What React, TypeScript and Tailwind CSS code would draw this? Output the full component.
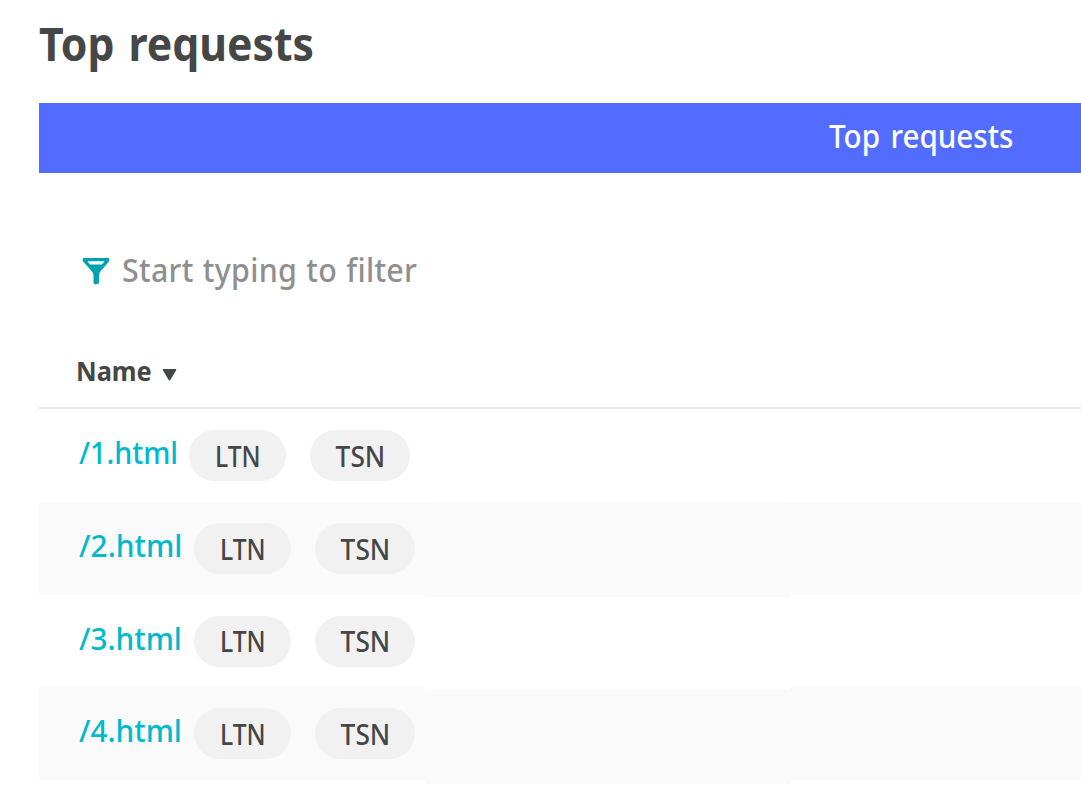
type Row = { name: string; linkWidth: string; textScale: string; tags: string[] };

const rows: Row[] = [
  { name: "/1.html", linkWidth: "w-[110px]", textScale: "scale-x-[0.925]", tags: ["LTN", "TSN"] },
  { name: "/2.html", linkWidth: "w-[115px]", textScale: "scale-x-[0.965]", tags: ["LTN", "TSN"] },
  { name: "/3.html", linkWidth: "w-[115px]", textScale: "scale-x-[0.96]", tags: ["LTN", "TSN"] },
  { name: "/4.html", linkWidth: "w-[115px]", textScale: "scale-x-[0.96]", tags: ["LTN", "TSN"] },
];

function FunnelIcon() {
  return (
    <svg width="28" height="28" viewBox="0 0 28 28" fill="#00a1b2" fillRule="evenodd">
      <path d="M1.500 1h25Q27.500 1 27.300 2.500V4L18.200 14.800Q17 16.300 17 18.500V25.500Q17 27.300 14.200 27.300T11.500 25.500V18.500Q11.500 16.300 10.200 14.800L.7 4V2.500Q.5 1 1.500 1ZM6 4.300Q5.500 4.300 6 5L7.600 7.100Q8 7.600 8.600 7.600H19.400Q20 7.600 20.400 7.100L22 5Q22.500 4.300 22 4.300Z" />
    </svg>
  );
}

function Tag({ label }: { label: string }) {
  const wide = label === "TSN";
  return (
    <span
      className={`flex h-[51px] items-center justify-center rounded-full bg-[#f1f1f1] text-[28px] font-medium leading-none text-[#454646] ${
        wide ? "w-[100px]" : "w-[97px]"
      }`}
    >
      <span className={wide ? "origin-center scale-x-[0.94]" : "origin-center scale-x-[0.88]"}>{label}</span>
    </span>
  );
}

export default function App() {
  return (
    <main className="h-[793px] w-full overflow-hidden bg-white pl-[39px] font-['Noto_Sans',sans-serif] text-[#454646]">
      <h1 className="flex h-[103px] items-start pt-[19px] text-[46px] font-bold leading-[48px]">
        <span className="origin-left scale-x-[0.93] whitespace-nowrap [word-spacing:3px]">Top requests</span>
      </h1>
      <div className="flex h-[70px] items-start bg-[#526cff] pl-[790px] pt-[13px] text-[32px] font-medium leading-10 text-white">
        <span className="origin-left scale-x-[0.925] whitespace-nowrap [word-spacing:3px]">Top requests</span>
      </div>
      <div className="flex h-[174px] items-start pl-[43px] pt-[84px]">
        <FunnelIcon />
        <span className="-mt-[7px] ml-[12px] origin-left scale-x-[0.95] whitespace-nowrap text-[32px] font-medium leading-10 tracking-[0.3px] text-[#8f8f8f] [word-spacing:1px]">
          Start typing to filter
        </span>
      </div>
      <div className="flex h-[62px] items-start border-b-2 border-[#e6e6e6] pl-[37px] pt-[4px] text-[27px] font-bold leading-10">
        <span className="w-[86px] origin-left scale-x-[0.94]">Name</span>
        <svg className="mt-[18px]" width="15" height="12" viewBox="0 0 14 12" fill="#454646">
          <path d="M1 0h12q1.500 0 .5 1.500L7.800 11q-.8 1-1.600 0L.5 1.500Q-.5 0 1 0Z" />
        </svg>
      </div>
      <div className="grid grid-cols-[386px_365px_291px]">
        <div>
          {rows.map((row) => (
            <div
              key={row.name}
              className="flex h-[92.6px] items-start pl-10 pt-[21px] first:h-[93px] even:bg-[#fafafa]"
            >
              <a className={`shrink-0 text-[31px] font-medium leading-[44px] text-[#00b9cc] ${row.linkWidth}`}>
                <span className={`inline-block origin-left ${row.textScale}`}>{row.name}</span>
              </a>
              <span className="flex gap-[24px]">
                {row.tags.map((t) => (
                  <Tag key={t} label={t} />
                ))}
              </span>
            </div>
          ))}
        </div>
        <div className="pt-[0.5px]">
          {rows.map((row) => (
            <div key={row.name} className="h-[93.500px] even:bg-[#fafafa]" />
          ))}
        </div>
        <div>
          {rows.map((row) => (
            <div key={row.name} className="h-[92.6px] first:h-[93px] even:bg-[#fafafa]" />
          ))}
        </div>
      </div>
    </main>
  );
}
